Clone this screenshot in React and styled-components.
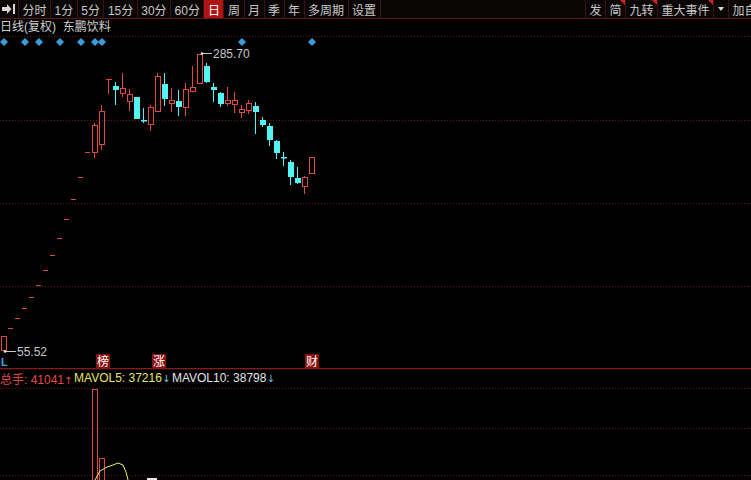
import React from 'react';
import styled, {createGlobalStyle} from 'styled-components';

const UP = '#e04a44';
const DOWN = '#54f4f4';
const GRID = '#5a1c1c';

const GlobalStyle = createGlobalStyle`
  html, body {
    margin: 0;
    padding: 0;
    background: #000;
  }
  body {
    font-family: "Liberation Sans", "Noto Sans CJK SC", sans-serif;
    overflow: hidden;
  }
`;

const Page = styled.div`
  width: 751px;
  height: 480px;
  background: #000;
  display: flex;
  flex-direction: column;
  overflow: hidden;
`;

const Toolbar = styled.div`
  height: 18px;
  flex-shrink: 0;
  display: flex;
  background: #0b0606;
  border-bottom: 1px solid #5c1616;
`;

const ToolGroup = styled.div`
  display: flex;
  height: 100%;
  flex-shrink: 0;
  ${p => p.$right && `
    margin-left: auto;
    margin-right: -22px;
    border-left: 1px solid #3c1212;
  `}
`;

const ToolButton = styled.div`
  position: relative;
  height: 18px;
  padding: 0 ${p => p.$pad || 3.5}px;
  display: flex;
  align-items: center;
  font-size: 12px;
  color: ${p => p.$active ? '#fff' : '#c8c8c8'};
  background: ${p => p.$active ? '#b01414' : 'transparent'};
  border-right: 1px solid #3c1212;
  white-space: nowrap;

  ${p => p.$flag && `
    &::after {
      content: '';
      position: absolute;
      top: 0;
      right: 0;
      border-top: 5px solid #d82020;
      border-left: 5px solid transparent;
    }
  `}
`;

const Title = styled.div`
  height: 17px;
  flex-shrink: 0;
  line-height: 17px;
  font-size: 12px;
  color: #cfcfcf;
  white-space: pre;
`;

const Pane = styled.svg`
  display: block;
  flex-shrink: 0;
  font-family: "Liberation Sans", "Noto Sans CJK SC", sans-serif;
`;

const Divider = styled.div`
  height: 1px;
  flex-shrink: 0;
  background: #801c1c;
  box-shadow: 0 1px 0 #2a0808;
`;

const VolumeHeader = styled.div`
  height: 18px;
  flex-shrink: 0;
  display: flex;
  align-items: center;
  gap: 3px;
  font-size: 12px;
  white-space: nowrap;
`;

const Stat = styled.span`
  color: ${p => p.$color};
`;

const Arrow = styled.span`
  display: inline-block;
  width: 7px;
  text-align: center;
  color: ${p => p.$color};
  font-family: "DejaVu Sans", sans-serif;
  font-size: 10px;
`;

const leftTools = ['分时', '1分', '5分', '15分', '30分', '60分', '日', '周', '月', '季', '年', '多周期', '设置'];

// [x, type, bodyTop, bodyBottom, wickTop, wickBottom] in page pixels
const dashes = [328, 318, 308, 297, 285, 270, 255, 238, 219, 199, 177, 152];
const candles = [
    [1, 'up', 336, 350, 336, 350],
    ...dashes.map((y, i) => [8 + i * 7, 'dash', y, y, y, y]),
    [92, 'up', 125, 152, 123, 158],
    [99, 'up', 111, 144, 105, 150],
    [106, 'T', 79, 79, 79, 94],
    [113, 'down', 86, 90, 82, 105],
    [120, 'up', 88, 93, 73, 97],
    [127, 'up', 94, 101, 89, 111],
    [134, 'down', 97, 119, 97, 119],
    [141, 'down', 120, 121, 108, 123],
    [148, 'up', 107, 124, 105, 131],
    [155, 'up', 76, 111, 73, 112],
    [162, 'down', 84, 99, 73, 106],
    [169, 'up', 100, 103, 88, 112],
    [176, 'down', 101, 107, 90, 116],
    [183, 'up', 89, 107, 83, 116],
    [190, 'up', 87, 91, 66, 92],
    [197, 'up', 54, 83, 54, 83],
    [204, 'down', 66, 82, 63, 83],
    [211, 'down', 87, 90, 83, 102],
    [218, 'down', 93, 104, 92, 107],
    [225, 'up', 100, 103, 87, 106],
    [232, 'up', 100, 104, 92, 113],
    [239, 'up', 109, 112, 105, 118],
    [246, 'up', 103, 110, 100, 114],
    [253, 'down', 106, 112, 102, 134],
    [260, 'down', 120, 125, 117, 127],
    [267, 'down', 126, 140, 123, 146],
    [274, 'down', 141, 153, 140, 159],
    [281, 'down', 157, 158, 152, 166],
    [288, 'down', 162, 177, 160, 185],
    [295, 'down', 178, 183, 167, 184],
    [302, 'up', 177, 186, 176, 194],
    [309, 'up', 157, 173, 157, 173],
];

const diamonds = [4, 25, 39, 60, 81, 95, 102, 242, 312];
const markers = [[96, '榜'], [152, '涨'], [305, '财']];

const Candle = ({c}) => {
    const [x, type, bt, bb, wt, wb] = c;
    const cx = x + 2.5;
    if (type === 'dash') {
        return <line x1={x} x2={x + 5} y1={bt + 0.5} y2={bt + 0.5} stroke={UP}/>;
    }
    if (type === 'T') {
        return (
            <g stroke={UP}>
                <line x1={x} x2={x + 6} y1={bt + 0.5} y2={bt + 0.5}/>
                <line x1={cx} x2={cx} y1={wt} y2={wb}/>
            </g>
        );
    }
    if (type === 'up') {
        return (
            <g stroke={UP} fill="none">
                <line x1={cx} x2={cx} y1={wt} y2={bt}/>
                <line x1={cx} x2={cx} y1={bb} y2={wb}/>
                <rect x={x + 0.5} y={bt + 0.5} width={5} height={Math.max(bb - bt, 1)}/>
            </g>
        );
    }
    return (
        <g>
            <line x1={cx} x2={cx} y1={wt} y2={wb} stroke={DOWN}/>
            <rect x={x} y={bt} width={6} height={Math.max(bb - bt, 1.5)} fill={DOWN}/>
        </g>
    );
};

const PriceChart = () => (
    <Pane width={751} height={332} viewBox="0 36 751 332">
        {[36.5, 120.5, 203.5, 286.5].map(y =>
            <line key={y} x1={0} x2={751} y1={y} y2={y} stroke={GRID} strokeDasharray="1 2"/>
        )}
        {diamonds.map(x =>
            <polygon key={x} points={`${x},38 ${x + 4},42 ${x},46 ${x - 4},42`} fill="#3a9ede"/>
        )}
        {candles.map((c, i) => <Candle key={i} c={c}/>)}

        <line x1={202} x2={212} y1={53.5} y2={53.5} stroke="#c8c8c8"/>
        <circle cx={202} cy={53.5} r={1.3} fill="#e8e8e8"/>
        <text x={213} y={57.5} fontSize={12} fill="#c8c8c8">285.70</text>

        <line x1={5} x2={16} y1={351.5} y2={351.5} stroke="#c8c8c8"/>
        <circle cx={5} cy={351.5} r={1.3} fill="#e8e8e8"/>
        <text x={17} y={355.5} fontSize={12} fill="#c8c8c8">55.52</text>

        <text x={1} y={366} fontSize={11} fontWeight="bold" fill="#3aa6e6">L</text>
        {markers.map(([x, t]) => (
            <g key={t}>
                <rect x={x} y={354} width={14} height={14} fill="#8a1010"/>
                <text x={x + 1} y={366} fontSize={12} fill="#fff">{t}</text>
            </g>
        ))}
    </Pane>
);

const VolumeChart = () => (
    <Pane width={751} height={93} viewBox="0 387 751 93">
        {[388.5, 428.5, 475.5].map(y =>
            <line key={y} x1={0} x2={751} y1={y} y2={y} stroke={GRID} strokeDasharray="1 2"/>
        )}
        <rect x={92.5} y={389.5} width={5} height={100} stroke={UP} fill="none"/>
        <rect x={99.5} y={458.5} width={5} height={30} stroke={UP} fill="none"/>
        <polyline points="95,480 100,471 107,467 113,465 118,463 123,465 126,472 128,480"
                  stroke="#f0f070" fill="none"/>
        <line x1={147} x2={157} y1={479} y2={479} stroke="#e8e8e8" strokeWidth={2}/>
    </Pane>
);

const App = () => {
    return (
        <Page>
            <GlobalStyle/>
            <Toolbar>
                <ToolGroup>
                    <ToolButton $pad={2}>
                        <svg width={14} height={12} viewBox="0 0 14 12">
                            <polygon points="0,4 5,4 5,1 9.5,6 5,11 5,8 0,8" fill="#d8d8d8"/>
                            <rect x={11} y={1} width={2} height={10} fill="#d8d8d8"/>
                        </svg>
                    </ToolButton>
                    {leftTools.map(t => <ToolButton key={t} $active={t === '日'}>{t}</ToolButton>)}
                </ToolGroup>
                <ToolGroup $right>
                    <ToolButton>发</ToolButton>
                    <ToolButton $flag>简</ToolButton>
                    <ToolButton $flag>九转</ToolButton>
                    <ToolButton $flag>重大事件</ToolButton>
                    <ToolButton $pad={4}>
                        <svg width={6} height={4} viewBox="0 0 6 4">
                            <polygon points="0,0 6,0 3,4" fill="#d8d8d8"/>
                        </svg>
                    </ToolButton>
                    <ToolButton>加自选</ToolButton>
                </ToolGroup>
            </Toolbar>
            <Title>日线(复权)  东鹏饮料</Title>
            <PriceChart/>
            <Divider/>
            <VolumeHeader>
                <Stat $color="#e24848">总手: 41041<Arrow $color="#e24848">↑</Arrow></Stat>
                <Stat $color="#e6e66a">MAVOL5: 37216<Arrow $color="#7cc4e8">↓</Arrow></Stat>
                <Stat $color="#e4e4e4">MAVOL10: 38798<Arrow $color="#7cc4e8">↓</Arrow></Stat>
            </VolumeHeader>
            <VolumeChart/>
        </Page>
    );
};

export default App;
